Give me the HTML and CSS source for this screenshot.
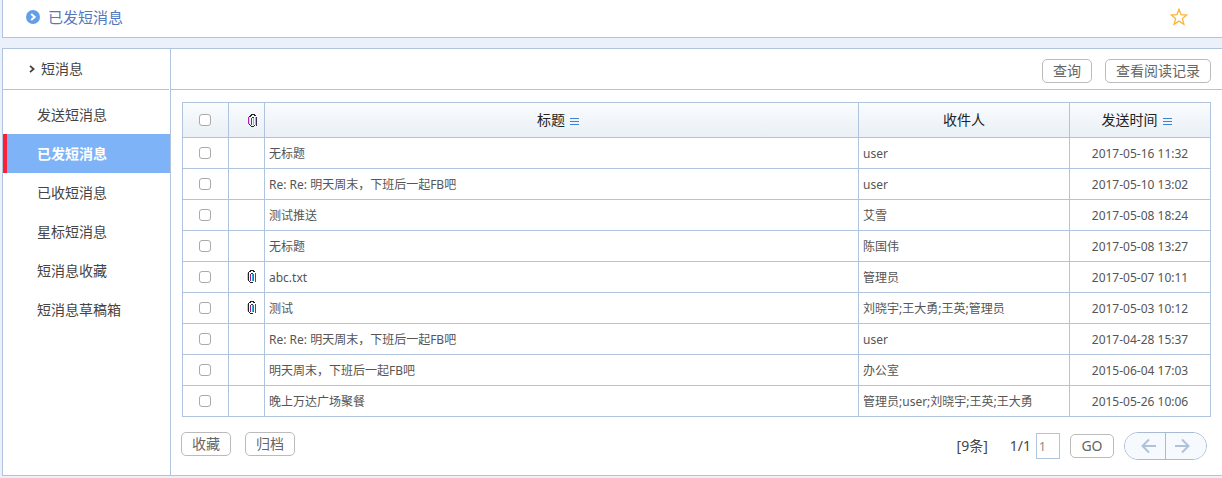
FILE: index.html
```html
<!DOCTYPE html>
<html lang="zh-CN">
<head>
<meta charset="utf-8">
<title>已发短消息</title>
<link rel="stylesheet" href="styles.css">
</head>
<body>
<svg class="defs" aria-hidden="true">
  <symbol id="clip" viewBox="0 0 10 14">
    <g fill="none" shape-rendering="crispEdges">
      <path d="M.5 3V10" stroke="#e8d44a"/>
      <path d="M1.5 2V11" stroke="#222"/>
      <path d="M2 1.5H4M6 1.5H8M3 .5H7" stroke="#222"/>
      <path d="M3.5 4V11" stroke="#8a1d9a"/>
      <path d="M4 3.5H6" stroke="#333"/>
      <path d="M5.5 4V11" stroke="#35b7dc"/>
      <path d="M6.5 4V11" stroke="#58618c"/>
      <path d="M2 11.5H3M3 12.5H6" stroke="#222"/>
      <path d="M8.5 3V12" stroke="#9a1da0"/>
    </g>
  </symbol>
  <symbol id="clip-head" viewBox="0 0 10 14">
    <g fill="none" shape-rendering="crispEdges">
      <path d="M.5 3V10" stroke="#b321b0"/>
      <path d="M1.5 3V10" stroke="#a9dff2"/>
      <path d="M1 2.5H3M2 1.5H4M3 .5H7M6 1.5H8" stroke="#222"/>
      <path d="M3.5 4V11" stroke="#8a1d9a"/>
      <path d="M4 3.5H6" stroke="#333"/>
      <path d="M5.5 4V11" stroke="#f0a63c"/>
      <path d="M1 10.5H2M2 11.5H3M3 12.5H6M6 11.5H7" stroke="#222"/>
      <path d="M7.5 3V11" stroke="#7cc8e8"/>
      <path d="M8.5 3V12" stroke="#3c2e4c"/>
    </g>
  </symbol>
</svg>
<header class="topbar">
  <svg class="topbar-icon" viewBox="0 0 14 14" aria-hidden="true"><circle cx="7" cy="7" r="7" fill="#639ee6"/><path d="M5.2 4L8.7 7L5.2 10" fill="none" stroke="#fff" stroke-width="2"/></svg>
  <h1 class="topbar-title">已发短消息</h1>
  <button class="star" type="button" aria-label="收藏页面"><svg viewBox="0 0 18 18" width="18" height="18"><path d="M9 1.3L11.1 6.7L16.8 7L12.4 10.6L13.9 16.2L9 13.1L4.1 16.2L5.6 10.6L1.2 7L6.9 6.7Z" fill="none" stroke="#fbb534" stroke-width="1.3"/></svg></button>
</header>
<div class="panel">
  <nav class="sidebar">
    <h2 class="sidebar-head"><svg class="chevron" viewBox="0 0 6 8" aria-hidden="true"><path d="M1 .8L4.6 4L1 7.2" fill="none" stroke="#444" stroke-width="1.8"/></svg>短消息</h2>
    <ul class="menu">
      <li><a href="#">发送短消息</a></li>
      <li><a class="active" href="#">已发短消息</a></li>
      <li><a href="#">已收短消息</a></li>
      <li><a href="#">星标短消息</a></li>
      <li><a href="#">短消息收藏</a></li>
      <li><a href="#">短消息草稿箱</a></li>
    </ul>
  </nav>
  <main class="main">
    <div class="toolbar">
      <button class="btn" type="button">查询</button>
      <button class="btn" type="button">查看阅读记录</button>
    </div>
    <div class="content">
      <table class="messages">
        <colgroup><col class="c-check"><col class="c-clip"><col><col class="c-to"><col class="c-time"></colgroup>
        <thead>
          <tr>
            <th class="check"><input type="checkbox" aria-label="全选"></th>
            <th class="clip-cell"><svg class="clip"><use href="#clip-head"/></svg></th>
            <th class="sortable">标题<svg class="sort" viewBox="0 0 9 7"><path d="M0 .5H9M0 3.5H9M0 6.5H9" stroke="#3b84d8"/></svg></th>
            <th>收件人</th>
            <th class="sortable">发送时间<svg class="sort" viewBox="0 0 9 7"><path d="M0 .5H9M0 3.5H9M0 6.5H9" stroke="#3b84d8"/></svg></th>
          </tr>
        </thead>
        <tbody>
          <tr><td class="check"><input type="checkbox" aria-label="选择"></td><td></td><td>无标题</td><td>user</td><td class="time">2017-05-16 11:32</td></tr>
          <tr><td class="check"><input type="checkbox" aria-label="选择"></td><td></td><td>Re: Re: 明天周末，下班后一起FB吧</td><td>user</td><td class="time">2017-05-10 13:02</td></tr>
          <tr><td class="check"><input type="checkbox" aria-label="选择"></td><td></td><td>测试推送</td><td>艾雪</td><td class="time">2017-05-08 18:24</td></tr>
          <tr><td class="check"><input type="checkbox" aria-label="选择"></td><td></td><td>无标题</td><td>陈国伟</td><td class="time">2017-05-08 13:27</td></tr>
          <tr><td class="check"><input type="checkbox" aria-label="选择"></td><td class="clip-cell"><svg class="clip"><use href="#clip"/></svg></td><td>abc.txt</td><td>管理员</td><td class="time">2017-05-07 10:11</td></tr>
          <tr><td class="check"><input type="checkbox" aria-label="选择"></td><td class="clip-cell"><svg class="clip"><use href="#clip"/></svg></td><td>测试</td><td>刘晓宇;王大勇;王英;管理员</td><td class="time">2017-05-03 10:12</td></tr>
          <tr><td class="check"><input type="checkbox" aria-label="选择"></td><td></td><td>Re: Re: 明天周末，下班后一起FB吧</td><td>user</td><td class="time">2017-04-28 15:37</td></tr>
          <tr><td class="check"><input type="checkbox" aria-label="选择"></td><td></td><td>明天周末，下班后一起FB吧</td><td>办公室</td><td class="time">2015-06-04 17:03</td></tr>
          <tr><td class="check"><input type="checkbox" aria-label="选择"></td><td></td><td>晚上万达广场聚餐</td><td>管理员;user;刘晓宇;王英;王大勇</td><td class="time">2015-05-26 10:06</td></tr>
        </tbody>
      </table>
      <div class="footer">
        <div class="actions">
          <button class="btn" type="button">收藏</button>
          <button class="btn" type="button">归档</button>
        </div>
        <div class="pager">
          <span class="total">[9条]</span>
          <label class="page-label" for="page">1/1</label>
          <input class="page" id="page" type="text" value="1">
          <button class="btn go" type="button">GO</button>
          <div class="arrows">
            <button class="prev" type="button" aria-label="上一页"><svg width="16" height="16" viewBox="0 0 16 16"><path d="M15 8H2M8 1.5L1.5 8L8 14.5" fill="none" stroke="#b0c2da" stroke-width="2"/></svg></button>
            <button class="next" type="button" aria-label="下一页"><svg width="16" height="16" viewBox="0 0 16 16"><path d="M1 8H14M8 1.5L14.5 8L8 14.5" fill="none" stroke="#b0c2da" stroke-width="2"/></svg></button>
          </div>
        </div>
      </div>
    </div>
  </main>
</div>
</body>
</html>
```
FILE: styles.css
```css
* { box-sizing: border-box; }
body {
  margin: 0;
  padding: 0 0 2px 2px;
  background: #eaf1fb;
  color: #444;
  font: 14px/20px "Noto Sans", "Noto Sans CJK SC", sans-serif;
}
button, input { font: inherit; color: inherit; margin: 0; }
button { cursor: pointer; }
.defs { display: none; }
.topbar {
  display: flex;
  align-items: center;
  height: 38px;
  padding: 0 34px 4px 23px;
  border: 1px solid #b0c4de;
  border-width: 0 0 1px 1px;
  background: #fff;
}
.topbar-icon { width: 14px; height: 14px; margin-right: 8px; }
.topbar-title { margin: 0; font-size: 15px; font-weight: 400; color: #5478be; }
.star { margin-left: auto; padding: 0; border: 0; background: none; }
.star svg { display: block; }
.panel {
  display: flex;
  margin-top: 10px;
  border: 1px solid #b0c4de;
  border-right: 0;
  background: #fff;
}
.sidebar { flex: 0 0 168px; border-right: 1px solid #b0c4de; }
.sidebar-head {
  display: flex;
  align-items: center;
  height: 41px;
  margin: 0 1px 0 0;
  padding-left: 26px;
  border-bottom: 1px solid #b0c4de;
  font-size: 14px;
  font-weight: 400;
}
.chevron { width: 6px; height: 8px; margin-right: 6px; }
.menu { margin: 0; padding: 5px 0; list-style: none; }
.menu a {
  display: block;
  padding-left: 34px;
  line-height: 39px;
  color: #444;
  text-decoration: none;
}
.menu a.active {
  padding-left: 30px;
  border-left: 4px solid #fb1f37;
  background: #7eb3f7;
  color: #fff;
  font-weight: 700;
}
.main { flex: 1; min-width: 0; }
.toolbar {
  display: flex;
  justify-content: flex-end;
  align-items: center;
  gap: 13px;
  height: 41px;
  padding: 4px 11px 0 0;
  border-bottom: 1px solid #b0c4de;
}
.btn {
  height: 24px;
  padding: 0 10px;
  border: 1px solid #bbb;
  border-radius: 5px;
  background: #fff;
  color: #666;
  line-height: 20px;
}
.content { padding: 12px 11px 15px 10px; }
.messages {
  width: calc(100% - 1px);
  margin-left: 1px;
  border-collapse: collapse;
  table-layout: fixed;
  font-size: 12px;
}
.c-check { width: 46px; }
.c-clip { width: 36px; }
.c-to { width: 211px; }
.c-time { width: 141px; }
.messages th, .messages td { border: 1px solid #b0c4de; }
.messages th {
  height: 35px;
  padding: 0;
  font-size: 14px;
  font-weight: 400;
  color: #222;
}
.messages .sortable { padding-right: 7px; }
.messages thead tr { background: linear-gradient(#fafcfe, #e9eff5); }
.messages td { height: 31px; padding: 2px 4px 0; color: #555; }
.messages .time { text-align: center; }
.messages .check { padding: 0 2px 0 0; }
.messages input {
  appearance: none;
  display: block;
  width: 12px;
  height: 12px;
  margin: 0 auto;
  border: 1px solid #aaa;
  border-radius: 3px;
  background: #fff;
}
.messages .clip-cell { padding: 0 0 0 11px; }
.messages th.clip-cell { padding: 2px 0 0 13px; }
.clip { display: block; width: 10px; height: 14px; margin: 0 auto; }
.sort { width: 9px; height: 7px; margin-left: 5px; }
.footer {
  display: flex;
  justify-content: space-between;
  align-items: flex-start;
  padding-top: 15px;
}
.actions { display: flex; gap: 14px; }
.pager { display: flex; align-items: center; padding-right: 4px; }
.page-label { margin: 0 5px 0 22px; }
.page {
  width: 24px;
  height: 26px;
  padding: 0 2px;
  border: 1px solid #b0c4de;
  border-radius: 0;
  background: #fff;
  color: #888;
  font-size: 12px;
}
.go { width: 44px; margin: 0 10px; }
.arrows {
  display: flex;
  height: 28px;
  border: 1px solid #a9bbd3;
  border-radius: 14px;
  overflow: hidden;
}
.arrows button {
  display: flex;
  align-items: center;
  width: 40px;
  padding: 0;
  border: 0;
  background: #f6f9fe;
}
.arrows .prev { width: 41px; padding-left: 16px; border-right: 1px solid #a9bbd3; }
.arrows .next { padding-left: 8px; }
```
